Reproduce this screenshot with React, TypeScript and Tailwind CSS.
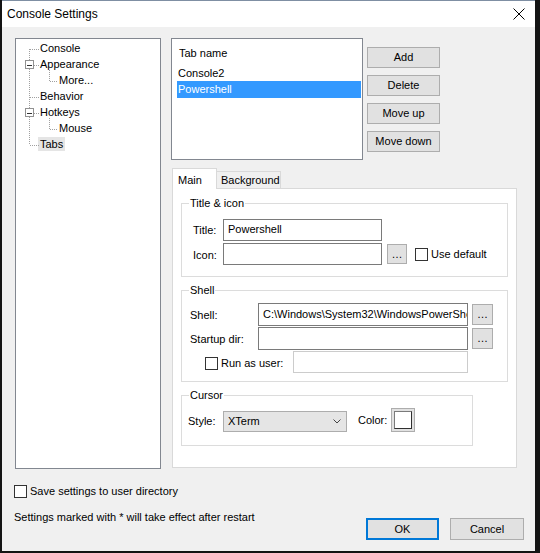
import React from 'react'

type TreeItem = { label: string; level: 1 | 2; selected?: boolean }

const treeItems: TreeItem[] = [
  { label: 'Console', level: 1 },
  { label: 'Appearance', level: 1 },
  { label: 'More...', level: 2 },
  { label: 'Behavior', level: 1 },
  { label: 'Hotkeys', level: 1 },
  { label: 'Mouse', level: 2 },
  { label: 'Tabs', level: 1, selected: true },
]

function Button({ children, className = '' }: { children: React.ReactNode; className?: string }) {
  return (
    <div
      className={`flex items-center justify-center border border-[#adadad] bg-[#e1e1e1] text-black ${className}`}
    >
      {children}
    </div>
  )
}

function Checkbox({ className = '' }: { className?: string }) {
  return <div className={`h-[13px] w-[13px] shrink-0 border border-[#333] bg-white ${className}`} />
}

function TreeLines() {
  // connector lines + expander boxes of the tree view
  const dot = { stroke: '#a0a0a0', strokeDasharray: '1 1', shapeRendering: 'crispEdges' as const }
  const level1 = [10, 26, 58, 74, 106]
  return (
    <svg className="absolute left-0 top-0" width="60" height="120" viewBox="0 0 60 120">
      <line x1="13.5" y1="10" x2="13.5" y2="106" style={dot} />
      {level1.map((y) => (
        <line key={y} x1="14" y1={y + 0.5} x2="23" y2={y + 0.5} style={dot} />
      ))}
      <line x1="33.5" y1="31" x2="33.5" y2="42" style={dot} />
      <line x1="34" y1="42.5" x2="42" y2="42.5" style={dot} />
      <line x1="33.5" y1="79" x2="33.5" y2="90" style={dot} />
      <line x1="34" y1="90.5" x2="42" y2="90.5" style={dot} />
      {[26, 74].map((y) => (
        <g key={y} shapeRendering="crispEdges">
          <rect x="9.5" y={y - 4.5} width="8" height="8" fill="#fff" stroke="#919191" />
          <line x1="11" y1={y + 0.5} x2="16" y2={y + 0.5} stroke="#333" />
        </g>
      ))}
    </svg>
  )
}

function GroupBox({
  title,
  className = '',
  children,
}: {
  title: string
  className?: string
  children: React.ReactNode
}) {
  return (
    <fieldset className={`border border-[#dcdcdc] ${className}`}>
      <legend className="ml-[7px] px-[1px] leading-[14px]">{title}</legend>
      {children}
    </fieldset>
  )
}

export default function App() {
  return (
    <div className="h-[553px] w-[540px] bg-[#141414] pl-[2px] font-['Liberation_Sans',Arial,sans-serif] text-[11px] text-black">
      <div className="flex h-[551px] w-[533px] flex-col border-t border-[#7f8fa3] bg-[#f0f0f0]">
        {/* title bar */}
        <div className="flex h-[26px] items-center justify-between bg-white pl-[5px] pr-[10px]">
          <span className="text-[12px]">Console Settings</span>
          <svg width="12" height="12" viewBox="0 0 12 12">
            <path d="M0.5 0.5 L11.5 11.5 M11.5 0.5 L0.5 11.5" stroke="#000" strokeWidth="1" />
          </svg>
        </div>

        <div className="flex flex-1 flex-col pl-[13px] pr-[11px] pt-[11px]">
          <div className="flex">
            {/* tree */}
            <div className="relative h-[431px] w-[146px] border border-[#828790] bg-white pt-[1px]">
              <TreeLines />
              {treeItems.map((it) => (
                <div
                  key={it.label}
                  className={`flex h-[16px] items-center ${it.level === 1 ? 'pl-[22px]' : 'pl-[41px]'}`}
                >
                  <span className={`px-[2px] leading-[14px] ${it.selected ? 'bg-[#e5e5e5]' : ''}`}>
                    {it.label}
                  </span>
                </div>
              ))}
            </div>

            {/* right column */}
            <div className="ml-[10px] flex w-[346px] flex-col">
              <div className="flex">
                <div className="h-[122px] w-[192px] border border-[#828790] bg-white pl-[5px] pr-[1px] pt-[6px]">
                  <div className="flex h-[16px] items-center pl-[2px]">Tab name</div>
                  <div className="mt-[4px] flex h-[16px] items-center pl-[1px]">Console2</div>
                  <div className="flex h-[17px] items-center bg-[#3399ff] pl-[1px] text-white">Powershell</div>
                </div>
                <div className="ml-[4px] flex flex-col gap-[7px] pt-[9px]">
                  <Button className="h-[21px] w-[73px]">Add</Button>
                  <Button className="h-[21px] w-[73px]">Delete</Button>
                  <Button className="h-[21px] w-[73px]">Move up</Button>
                  <Button className="h-[21px] w-[73px]">Move down</Button>
                </div>
              </div>

              {/* tab control */}
              <div className="ml-[1px] mt-[8px] flex items-end">
                <div className="relative z-10 -mb-px flex h-[21px] w-[45px] items-start border border-b-0 border-[#d9d9d9] bg-white pl-[5px] pt-[3px]">
                  Main
                </div>
                <div className="-ml-px flex h-[17px] w-[65px] items-center border border-b-0 border-[#d9d9d9] bg-[#f0f0f0] pl-[4px]">
                  Background
                </div>
              </div>
              <div className="ml-[1px] flex h-[280px] w-[345px] flex-col border border-[#d9d9d9] bg-white pl-[8px] pt-[7px]">
                <GroupBox title="Title & icon" className="w-[327px] pb-[11px] pt-[9px]">
                  <div className="flex h-[22px] items-center pl-[11px]">
                    <span className="w-[30px]">Title:</span>
                    <div className="h-[22px] w-[159px] border border-[#7a7a7a] bg-white pl-[4px] pt-[2px] leading-[14px]">
                      Powershell
                    </div>
                  </div>
                  <div className="mt-[2px] flex h-[22px] items-center pl-[11px]">
                    <span className="w-[30px] pt-[2px]">Icon:</span>
                    <div className="h-[22px] w-[159px] border border-[#7a7a7a] bg-white" />
                    <Button className="ml-[5px] h-[20px] w-[20px] leading-none">…</Button>
                    <Checkbox className="ml-[8px]" />
                    <span className="ml-[3px]">Use default</span>
                  </div>
                </GroupBox>

                <GroupBox title="Shell" className="mt-[6px] w-[327px] pb-[8px] pt-[6px]">
                  <div className="flex h-[23px] items-center pl-[8px]">
                    <span className="w-[68px] pt-[2px]">Shell:</span>
                    <div className="h-[23px] w-[210px] overflow-hidden whitespace-nowrap border border-[#7a7a7a] bg-white pl-[4px] pt-[3px] leading-[14px]">
                      C:\Windows\System32\WindowsPowerShell\v1.0\powershell.exe
                    </div>
                    <Button className="ml-[4px] h-[21px] w-[21px] leading-none">…</Button>
                  </div>
                  <div className="mt-[1px] flex h-[23px] items-center pl-[8px]">
                    <span className="w-[68px] pt-[2px]">Startup dir:</span>
                    <div className="h-[23px] w-[210px] border border-[#7a7a7a] bg-white" />
                    <Button className="ml-[4px] h-[21px] w-[21px] leading-none">…</Button>
                  </div>
                  <div className="mt-[1px] flex h-[22px] items-center pl-[23px]">
                    <Checkbox className="mt-[2px] h-[12px] w-[12px]" />
                    <span className="ml-[3px] w-[72px] pt-[2px]">Run as user:</span>
                    <div className="h-[22px] w-[175px] border border-[#cccccc] bg-white" />
                  </div>
                </GroupBox>

                <GroupBox title="Cursor" className="mt-[6px] w-[292px] pb-[13px] pt-[6px]">
                  <div className="flex h-[24px] items-center pl-[6px]">
                    <span className="w-[35px] pt-[2px]">Style:</span>
                    <div className="mt-[2px] flex h-[21px] w-[124px] items-center justify-between border border-[#adadad] bg-[#e5e5e5] pl-[4px] pr-[5px]">
                      <span>XTerm</span>
                      <svg width="8" height="5" viewBox="0 0 8 5">
                        <path d="M0.5 0.5 L4 4 L7.5 0.5" fill="none" stroke="#444" strokeWidth="1" />
                      </svg>
                    </div>
                    <span className="ml-[11px] w-[33px] pt-[1px]">Color:</span>
                    <div className="h-[24px] w-[24px] border border-[#adadad] bg-[#e1e1e1] p-[2px]">
                      <div className="h-full w-full border border-[#7a7a7a] border-b-[#303030] border-r-[#303030] bg-white" />
                    </div>
                  </div>
                </GroupBox>
              </div>
            </div>
          </div>

          {/* footer */}
          <div className="-ml-px mt-[15px] flex h-[14px] items-center">
            <Checkbox />
            <span className="ml-[3px]">Save settings to user directory</span>
          </div>
          <div className="mt-[12px] flex items-start">
            <span className="-ml-px leading-[14px]">Settings marked with * will take effect after restart</span>
            <div className="ml-auto mt-[8px] flex gap-[11px]">
              <div className="flex h-[22px] w-[73px] items-center justify-center border-2 border-[#0078d7] bg-[#e1e1e1]">
                OK
              </div>
              <Button className="h-[22px] w-[74px]">Cancel</Button>
            </div>
          </div>
        </div>
      </div>
    </div>
  )
}
